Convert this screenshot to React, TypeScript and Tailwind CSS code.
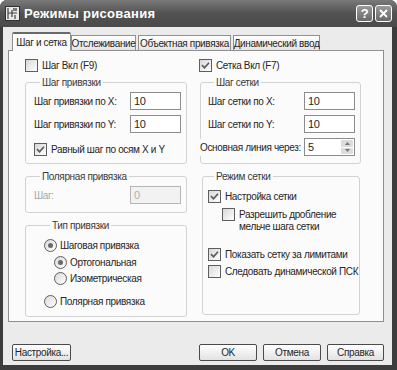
import React from 'react';

const ui = "font-['Liberation_Sans',Arial,sans-serif]";

function Check({ on }: { on?: boolean }) {
  return (
    <span className="flex h-[13px] w-[13px] shrink-0 items-center justify-center border border-[#5e5e5e] bg-linear-to-br from-[#d8d8d8] to-white">
      {on && (
        <svg width="9" height="9" viewBox="0 0 9 9">
          <path d="M1 4.2 L3.5 6.8 L8 1.8" stroke="#5a5a5a" strokeWidth="1.7" fill="none" />
        </svg>
      )}
    </span>
  );
}

function Radio({ on }: { on?: boolean }) {
  return (
    <span className="flex h-[13px] w-[13px] shrink-0 items-center justify-center rounded-full border border-[#5e5e5e] bg-linear-to-br from-[#dadada] to-white">
      {on && <span className="h-[5px] w-[5px] rounded-full bg-[#6a6a6a]" />}
    </span>
  );
}

function CheckRow({ on, label }: { on?: boolean; label: string }) {
  return (
    <div className="flex h-[13px] items-center gap-[4px]">
      <Check on={on} />
      <span>{label}</span>
    </div>
  );
}

function RadioRow({ on, label, className = '' }: { on?: boolean; label: string; className?: string }) {
  return (
    <div className={`flex h-[13px] items-center gap-[3px] ${className}`}>
      <Radio on={on} />
      <span>{label}</span>
    </div>
  );
}

function Field({ value, disabled }: { value: string; disabled?: boolean }) {
  return (
    <div
      className={`flex h-[18px] w-[51px] shrink-0 items-center border pl-[3px] text-[11px] ${
        disabled ? 'border-[#b5b5b5] bg-[#f2f2f2] text-[#b0b0b0]' : 'border-[#8c8c8c] bg-white'
      }`}
    >
      {value}
    </div>
  );
}

function InputRow({ label, value }: { label: string; value: string }) {
  return (
    <div className="flex items-center justify-between">
      <span>{label}</span>
      <Field value={value} />
    </div>
  );
}

function Btn({ label, w }: { label: string; w: string }) {
  return (
    <div
      className={`flex h-[17px] ${w} items-center justify-center rounded-[2px] border border-[#4a4a4a] bg-linear-to-b from-white to-[#e2e2e2]`}
    >
      {label}
    </div>
  );
}

export default function App() {
  return (
    <div className={`${ui} flex h-[370px] w-[397px] flex-col overflow-hidden whitespace-nowrap rounded-t-[7px] bg-[#3d3d3d] text-[10px] leading-[13px] tracking-[-0.35px] text-[#262626]`}>
      {/* title bar */}
      <div className="flex h-[27px] shrink-0 items-center bg-linear-to-b from-[#7a7a7a] via-[#525252] to-[#4a4a4a] pl-[5px] pr-[5px]">
        <svg width="15" height="15" viewBox="0 0 15 15" className="shrink-0">
          <rect x="0.5" y="0.5" width="14" height="14" fill="#e8e8e8" stroke="#303030" />
          <path d="M3 2 V13 M3 7 H12 M7 4 V11 M10 9 V13" stroke="#404040" strokeWidth="1.2" />
          <rect x="8" y="2" width="4" height="3" fill="#7a7a7a" />
        </svg>
        <span className="ml-[4px] text-[13px] font-bold tracking-[0.3px] text-white">Режимы рисования</span>
        <div className="ml-auto flex gap-[2px]">
          <div className="flex h-[17px] w-[17px] items-center justify-center rounded-[3px] border border-white bg-linear-to-b from-[#9a9a9a] to-[#6a6a6a] text-[13px] font-bold text-white">
            ?
          </div>
          <div className="flex h-[17px] w-[17px] items-center justify-center rounded-[3px] border border-white bg-linear-to-b from-[#9a9a9a] to-[#6a6a6a]">
            <svg width="9" height="9" viewBox="0 0 9 9">
              <path d="M1 1 L8 8 M8 1 L1 8" stroke="white" strokeWidth="1.8" />
            </svg>
          </div>
        </div>
      </div>

      {/* body */}
      <div className="ml-[3px] mr-[5px] mb-[5px] flex flex-1 flex-col bg-[#ebebeb]">
        {/* tabs */}
        <div className="mt-[5px] flex h-[18px] items-end pl-[9px]">
          <div className="relative z-10 -mb-px flex h-[19px] w-[59px] items-start justify-center rounded-t-[2px] border-x border-t-2 border-x-[#909090] border-t-[#6a6a6a] bg-[#fbfbfb] pt-[2px]">
            Шаг и сетка
          </div>
          <div className="flex h-[15px] w-[65px] items-center justify-center border-x border-t border-[#909090] bg-linear-to-b from-white to-[#e4e4e4]">
            Отслеживание
          </div>
          <div className="ml-[2px] flex h-[15px] w-[93px] items-center justify-center border-x border-t border-[#909090] bg-linear-to-b from-white to-[#e4e4e4]">
            Объектная привязка
          </div>
          <div className="ml-[2px] flex h-[15px] w-[87px] items-center justify-center border-x border-t border-[#909090] bg-linear-to-b from-white to-[#e4e4e4]">
            Динамический ввод
          </div>
        </div>

        {/* panel */}
        <div className="ml-[5px] mr-[8px] flex h-[272px] gap-[12px] border border-[#909090] bg-[#fbfbfb] pl-[16px] pt-[8px]">
          {/* left column */}
          <div className="flex w-[162px] flex-col">
            <CheckRow label="Шаг Вкл (F9)" />

            <fieldset className="mt-[4px] flex flex-col rounded-[3px] border border-[#d2d2d2] pb-[7px] pl-[8px] pr-[5px]">
              <legend className="ml-[6px] px-[2px] text-[#3a3a3a]">Шаг привязки</legend>
              <div className="mt-[3px] flex flex-col gap-[5px]">
                <InputRow label="Шаг привязки по X:" value="10" />
                <InputRow label="Шаг привязки по Y:" value="10" />
              </div>
              <div className="mt-[10px]">
                <CheckRow on label="Равный шаг по осям X и Y" />
              </div>
            </fieldset>

            <fieldset className="mt-[6px] flex flex-col rounded-[3px] border border-[#d2d2d2] pb-[8px] pl-[8px] pr-[5px]">
              <legend className="ml-[6px] px-[2px] text-[#3a3a3a]">Полярная привязка</legend>
              <div className="mt-[3px] flex items-center justify-between text-[#a8a8a8]">
                <span>Шаг:</span>
                <Field value="0" disabled />
              </div>
            </fieldset>

            <fieldset className="mt-[6px] flex flex-col rounded-[3px] border border-[#d2d2d2] pb-[8px] pl-[18px]">
              <legend className="ml-[6px] px-[2px] text-[#3a3a3a]">Тип привязки</legend>
              <RadioRow on label="Шаговая привязка" className="mt-[7px]" />
              <RadioRow on label="Ортогональная" className="ml-[10px] mt-[4px]" />
              <RadioRow label="Изометрическая" className="ml-[10px] mt-[3px]" />
              <RadioRow label="Полярная привязка" className="mt-[10px]" />
            </fieldset>
          </div>

          {/* right column */}
          <div className="flex w-[162px] flex-col">
            <CheckRow on label="Сетка Вкл (F7)" />

            <fieldset className="mt-[4px] ml-[1px] flex flex-col rounded-[3px] border border-[#d2d2d2] pb-[7px] pl-[7px] pr-[5px]">
              <legend className="ml-[6px] px-[2px] text-[#3a3a3a]">Шаг сетки</legend>
              <div className="mt-[3px] flex flex-col gap-[5px]">
                <InputRow label="Шаг сетки по X:" value="10" />
                <InputRow label="Шаг сетки по Y:" value="10" />
                <div className="-ml-[8px] flex items-center justify-between">
                  <span className="bg-[#fbfbfb] py-[2px]">Основная линия через:</span>
                  <div className="flex h-[18px] w-[51px] shrink-0 items-center border border-[#8c8c8c] bg-white pl-[3px] text-[11px]">
                    <span className="flex-1">5</span>
                    <div className="mr-[1px] flex h-[14px] w-[12px] flex-col gap-px">
                      <div className="flex flex-1 items-center justify-center rounded-[1px] bg-[#dcdcdc]">
                        <svg width="5" height="3" viewBox="0 0 5 3"><path d="M0 3 L2.5 0 L5 3 Z" fill="#777" /></svg>
                      </div>
                      <div className="flex flex-1 items-center justify-center rounded-[1px] bg-[#dcdcdc]">
                        <svg width="5" height="3" viewBox="0 0 5 3"><path d="M0 0 L2.5 3 L5 0 Z" fill="#777" /></svg>
                      </div>
                    </div>
                  </div>
                </div>
              </div>
            </fieldset>

            <fieldset className="mt-[6px] ml-[3px] mr-[1px] flex h-[145px] flex-col rounded-[3px] border border-[#d2d2d2] pl-[5px]">
              <legend className="ml-[6px] px-[2px] text-[#3a3a3a]">Режим сетки</legend>
              <div className="mt-[7px]">
                <CheckRow on label="Настройка сетки" />
              </div>
              <div className="ml-[14px] mt-[5px] flex items-start gap-[4px]">
                <Check />
                <span className="pt-px leading-[12px]">
                  Разрешить дробление
                  <br />
                  мельче шага сетки
                </span>
              </div>
              <div className="mt-[15px]">
                <CheckRow on label="Показать сетку за лимитами" />
              </div>
              <div className="mt-[4px]">
                <CheckRow label="Следовать динамической ПСК" />
              </div>
            </fieldset>
          </div>
        </div>

        {/* footer */}
        <div className="flex flex-1 items-end pb-[4px] pl-[9px] pr-[8px]">
          <Btn label="Настройка..." w="w-[59px]" />
          <div className="ml-auto flex gap-[6px]">
            <Btn label="OK" w="w-[58px]" />
            <Btn label="Отмена" w="w-[58px]" />
            <Btn label="Справка" w="w-[57px]" />
          </div>
        </div>
      </div>
    </div>
  );
}
